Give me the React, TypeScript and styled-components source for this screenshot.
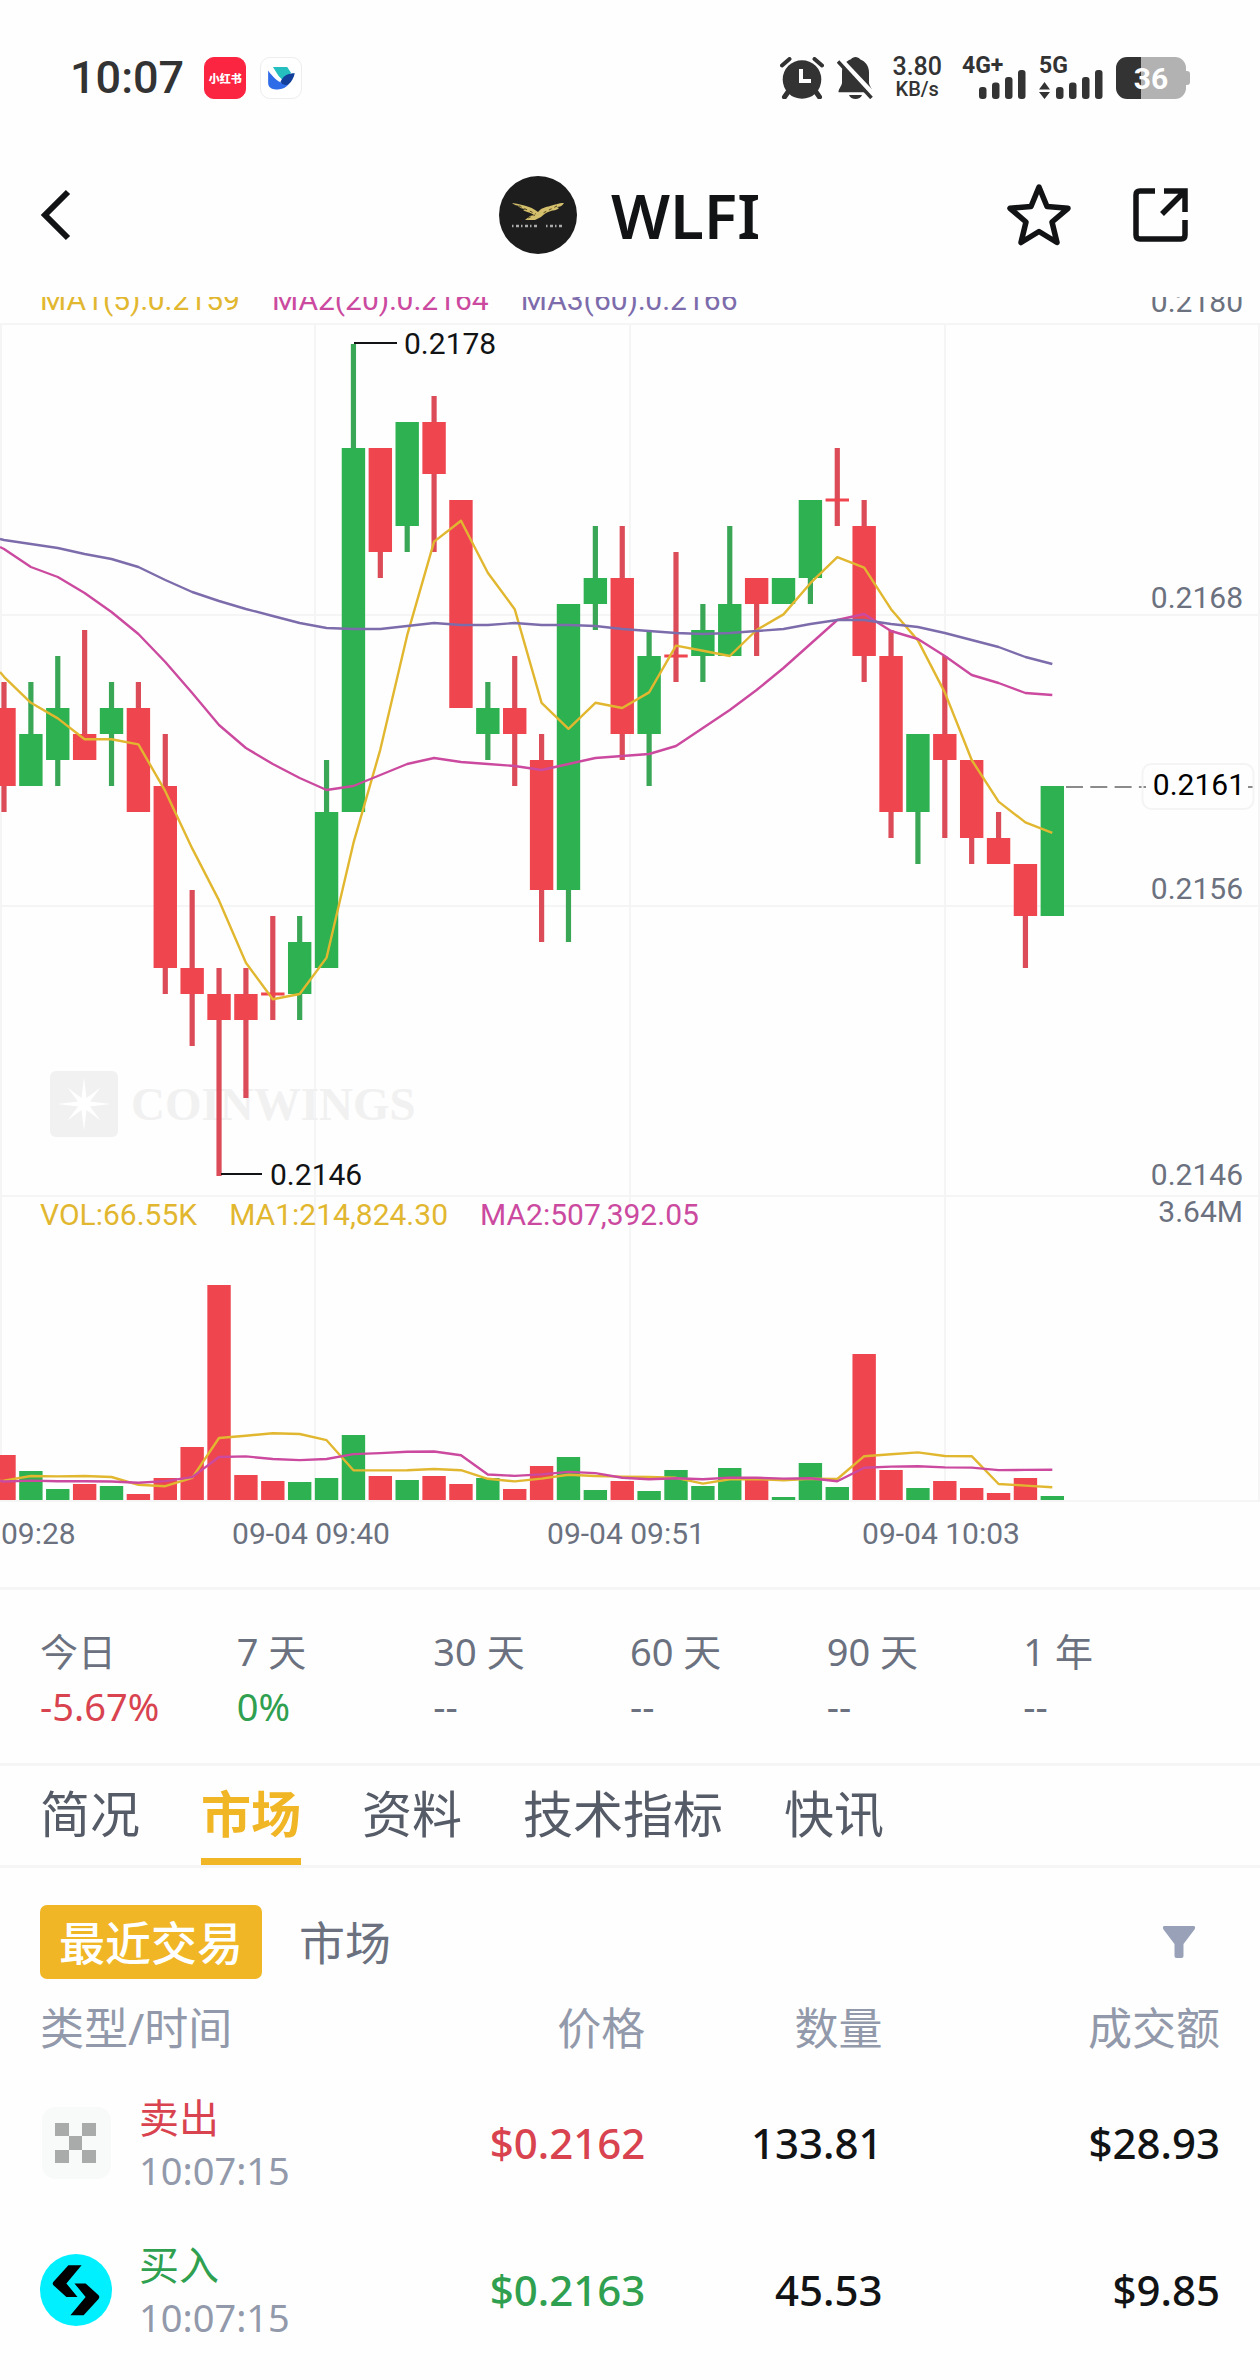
import React from 'react';
import styled, { createGlobalStyle } from 'styled-components';

const color = {
  up: '#2eb150',
  down: '#ef454f',
  upText: '#2fa04f',
  downText: '#d8434f',
  gold: '#f0b626',
  ma1: '#e2b730',
  ma2: '#cb4a9f',
  ma3: '#7d6cab',
  grid: '#f5f5f6',
  ink: '#111314',
  status: '#333333',
  axis: '#6b717e',
  muted: '#9299aa',
};

const GlobalStyle = createGlobalStyle`
  * { box-sizing: border-box; }
  body {
    margin: 0;
    background: #fefefe;
    color: ${color.ink};
    font-family: 'Noto Sans', 'Noto Sans CJK SC', sans-serif;
  }
  button { font: inherit; color: inherit; background: none; border: 0; padding: 0; cursor: pointer; }
  svg { display: block; }
`;

/* ---------- status bar ---------- */

const StatusBar = styled.div`
  display: flex;
  align-items: center;
  justify-content: space-between;
  height: 133px;
  padding: 23px 70px 0 70px;
  color: ${color.status};
  font-family: Roboto, 'Noto Sans CJK SC', sans-serif;
`;

const StatusGroup = styled.div<{ $gap: number }>`
  display: flex;
  align-items: center;
  gap: ${(p) => p.$gap}px;
`;

const Clock = styled.time`
  font-size: 45px;
  line-height: 52px;
  font-weight: 500;
  margin-right: 6px;
`;

const AppBadge = styled.span<{ $bg: string; $border: string }>`
  display: flex;
  align-items: center;
  justify-content: center;
  width: 42px;
  height: 42px;
  border-radius: 10px;
  border: 1px solid ${(p) => p.$border};
  background: ${(p) => p.$bg};
  color: #fff;
  font-size: 11px;
  font-weight: 900;
  white-space: nowrap;
`;

const NetSpeed = styled.div`
  display: flex;
  flex-direction: column;
  align-items: center;
  font-weight: 500;
  font-size: 25px;
  line-height: 22px;
  margin: 0 7px 0 5px;
  small { font-size: 20px; line-height: 22px; }
`;

const Signal = styled.div`
  display: flex;
  flex-direction: column;
  height: 42px;
  font-size: 23px;
  line-height: 18px;
  font-weight: 700;
  svg { margin-top: -6px; align-self: flex-end; }
`;

const Battery = styled.div`
  display: flex;
  align-items: center;
`;

const BatteryBody = styled.div`
  display: flex;
  align-items: center;
  justify-content: center;
  width: 70px;
  height: 42px;
  border-radius: 11px;
  background: linear-gradient(90deg, #333 36%, #b2b2b2 36%);
  color: #fff;
  font-size: 30px;
  font-weight: 700;
`;

const BatteryNub = styled.div`
  width: 4px;
  height: 14px;
  border-radius: 0 3px 3px 0;
  background: #b2b2b2;
`;

/* ---------- navigation ---------- */

const NavBar = styled.header`
  display: grid;
  grid-template-columns: 1fr auto 1fr;
  align-items: center;
  height: 164px;
  padding: 0 72px 0 40px;
`;

const BackButton = styled.button`
  justify-self: start;
`;

const Title = styled.h1`
  display: flex;
  align-items: center;
  gap: 34px;
  margin: 0 0 0 31px;
  font-size: 62px;
  line-height: 84px;
  font-weight: 600;
`;

const NavActions = styled.div`
  display: flex;
  align-items: center;
  justify-content: flex-end;
  gap: 61px;
`;

/* ---------- chart ---------- */

const ChartPane = styled.div`
  display: grid;
  overflow: hidden;
  > * { grid-area: 1 / 1; }
  > svg { width: 100%; height: auto; font-family: Roboto, sans-serif; font-size: 30px; }
`;

const Legend = styled.div<{ $clipped?: boolean }>`
  display: flex;
  gap: 32px;
  align-self: start;
  margin-top: ${(p) => (p.$clipped ? -15 : 0)}px;
  padding-left: 40px;
  font-family: Roboto, sans-serif;
  font-size: 30px;
  line-height: 36px;
  z-index: 1;
`;

const LegendItem = styled.span<{ $color: string }>`
  color: ${(p) => p.$color};
`;

/* ---------- stats ---------- */

const Stats = styled.dl`
  display: grid;
  grid-template-columns: repeat(6, 1fr);
  height: 179px;
  margin: 0;
  padding: 33px 40px 0;
  border-top: 3px solid ${color.grid};
  border-bottom: 3px solid ${color.grid};
`;

const StatLabel = styled.dt`
  font-size: 38px;
  line-height: 56px;
  color: ${color.axis};
`;

const StatValue = styled.dd<{ $color?: string }>`
  margin: 0;
  font-size: 38px;
  line-height: 54px;
  color: ${(p) => p.$color ?? color.axis};
`;

/* ---------- tabs ---------- */

const Tabs = styled.nav`
  display: flex;
  gap: 61px;
  height: 102px;
  padding: 0 40px;
  border-bottom: 3px solid ${color.grid};
`;

const Tab = styled.button<{ $active?: boolean }>`
  && {
    height: 99px;
    padding-top: 5px;
    border-bottom: 7px solid ${(p) => (p.$active ? color.gold : 'transparent')};
    color: ${(p) => (p.$active ? color.gold : '#555b67')};
    font-size: 50px;
    line-height: 87px;
    font-weight: ${(p) => (p.$active ? 700 : 400)};
  }
`;

const Toolbar = styled.div`
  display: flex;
  align-items: center;
  gap: 37px;
  margin-top: 37px;
  padding: 0 64px 0 40px;
`;

const Pill = styled.button<{ $active?: boolean }>`
  && {
    height: 74px;
    padding: ${(p) => (p.$active ? '0 19px' : '0')};
    border-radius: 7px;
    background: ${(p) => (p.$active ? color.gold : 'none')};
    color: ${(p) => (p.$active ? '#fff' : color.axis)};
    font-size: 46px;
    line-height: 74px;
    font-weight: ${(p) => (p.$active ? 500 : 400)};
  }
`;

const FilterButton = styled.button`
  margin-left: auto;
`;

/* ---------- trades ---------- */

const TradeTable = styled.table`
  width: calc(100% - 80px);
  margin: 9px 40px 0;
  border-collapse: collapse;
  table-layout: fixed;
`;

const HeadCell = styled.th<{ $width: string; $left?: boolean }>`
  width: ${(p) => p.$width};
  height: 80px;
  padding: 0;
  text-align: ${(p) => (p.$left ? 'left' : 'right')};
  font-size: 44px;
  line-height: 64px;
  font-weight: 400;
  color: ${color.muted};
  white-space: nowrap;
`;

const Cell = styled.td<{ $color?: string }>`
  height: 147px;
  padding: 3px 0 0;
  text-align: right;
  font-size: 42px;
  line-height: 56px;
  font-weight: 500;
  color: ${(p) => p.$color ?? color.ink};
`;

const TradeKind = styled.div`
  display: flex;
  align-items: center;
  gap: 27px;
  text-align: left;
  font-weight: 400;
`;

const Side = styled.div<{ $color: string }>`
  font-size: 40px;
  line-height: 54px;
  color: ${(p) => p.$color};
`;

const Time = styled.time`
  display: block;
  font-size: 38px;
  line-height: 50px;
  color: ${color.muted};
`;

/* ---------- chart data ---------- */

// High, body top, body bottom and low, in ticks of 0.0001 below 0.2178; then
// 1 for a rising candle, 0 for a falling one; then the volume.
const candles: [number, number, number, number, 0 | 1, number][] = [
  [13, 14, 17, 18, 0, 45], [13, 15, 17, 17, 1, 29], [12, 14, 16, 17, 1, 11], [11, 15, 16, 16, 0, 16],
  [13, 14, 15, 17, 1, 14], [13, 14, 18, 18, 0, 6], [15, 17, 24, 25, 0, 22], [21, 24, 25, 27, 0, 53],
  [24, 25, 26, 32, 0, 215], [24, 25, 26, 29, 0, 25], [22, 25, 25, 26, 0, 19], [22, 23, 25, 26, 1, 18],
  [16, 18, 24, 24, 1, 22], [0, 4, 18, 18, 1, 65], [4, 4, 8, 9, 0, 24], [3, 3, 7, 8, 1, 20],
  [2, 3, 5, 8, 0, 24], [6, 6, 14, 14, 0, 16], [13, 14, 15, 16, 1, 22], [12, 14, 15, 17, 0, 11],
  [15, 16, 21, 23, 0, 34], [10, 10, 21, 23, 1, 43], [7, 9, 10, 11, 1, 10], [7, 9, 15, 16, 0, 19],
  [11, 12, 15, 17, 1, 9], [8, 12, 12, 13, 1, 30], [10, 11, 12, 13, 1, 14], [7, 10, 12, 12, 1, 32],
  [9, 9, 10, 12, 0, 20], [9, 9, 10, 10, 1, 3], [6, 6, 9, 10, 1, 37], [4, 6, 6, 7, 1, 13],
  [6, 7, 12, 13, 0, 146], [11, 12, 18, 19, 0, 30], [15, 15, 18, 20, 1, 12], [12, 15, 16, 19, 0, 19],
  [16, 16, 19, 20, 0, 12], [18, 19, 20, 20, 0, 7], [20, 20, 22, 24, 0, 22], [17, 17, 22, 22, 1, 4],
];

const ma20 = [549, 567, 577, 593, 612, 634, 662, 693, 725, 748, 764, 778, 790, 786, 775, 764, 758, 762, 764, 766,
  770, 764, 758, 756, 754, 746, 728, 710, 690, 668, 644, 620, 614, 631, 639, 656, 675, 683, 693, 695];
const ma60 = [540, 544, 548, 554, 559, 567, 580, 592, 601, 609, 616, 623, 628, 629, 629, 626, 623, 625, 625, 623,
  625, 625, 626, 629, 631, 633, 634, 633, 631, 629, 624, 620, 620, 624, 627, 633, 640, 647, 657, 664];

const earlierCloses = [12, 10, 11, 12, 14];
const earlierVolumes = [20, 18, 16, 16, 18, 6, 13, 14, 19];

const cx = (i: number) => 4 + i * 26.88;
const priceY = (t: number) => 344 + t * 26;
const volumeY = (v: number) => 1500 - v;

function average(values: number[], before: number[], span: number): number[] {
  const all = [...before, ...values];
  return values.map((_, i) => {
    const end = i + before.length + 1;
    const part = all.slice(Math.max(0, end - span), end);
    return part.reduce((a, b) => a + b, 0) / part.length;
  });
}

const toPoints = (start: number, ys: number[]) =>
  [`0,${start}`, ...ys.map((y, i) => `${cx(i).toFixed(1)},${y.toFixed(1)}`)].join(' ');

const closes = candles.map(([, top, bottom, , up]) => (up ? top : bottom));
const volumes = candles.map((c) => c[5]);
const ma5 = average(closes, earlierCloses, 5).map(priceY);
const volMa5 = average(volumes, earlierVolumes, 5).map(volumeY);
const volMa10 = average(volumes, earlierVolumes, 10).map(volumeY);

// A candle that closed where it opened is drawn as a falling one in the price
// pane; its volume bar keeps the colour of the data.
const candleUp = (top: number, bottom: number, up: 0 | 1) => up === 1 && top !== bottom;

const volumeUp = (i: number, up: 0 | 1) => up === 1;

const MaLine = ({ points, stroke }: { points: string; stroke: string }) => (
  <polyline points={points} fill="none" stroke={stroke} strokeWidth="2.4" strokeLinejoin="round" />
);

const VerticalGrid = ({ from, to }: { from: number; to: number }) => (
  <g stroke={color.grid} strokeWidth="2">
    {[1, 315, 630, 945, 1259].map((x) => (
      <line key={x} x1={x} x2={x} y1={from} y2={to} />
    ))}
  </g>
);

const starPoints = Array.from({ length: 16 }, (_, i) => {
  const r = i % 2 ? 6.5 : i % 4 ? 23 : 26.5;
  const a = (i * Math.PI) / 8;
  return `${(84 + r * Math.sin(a)).toFixed(1)},${(1104 - r * Math.cos(a)).toFixed(1)}`;
}).join(' ');

const PriceChart = () => (
  <svg viewBox="0 297 1260 900" role="img" aria-label="WLFI price chart">
    <VerticalGrid from={324} to={1197} />
    <g stroke={color.grid} strokeWidth="2">
      {[324, 615, 906, 1196].map((y) => (
        <line key={y} x1="0" x2="1260" y1={y} y2={y} />
      ))}
    </g>
    <rect x="50" y="1071" width="68" height="66" rx="6" fill="#f1f1f1" />
    <polygon points={starPoints} fill="#fff" />
    <text x="131" y="1120" fill="#f1f1f1" fontFamily="'Liberation Serif', serif" fontWeight="700" fontSize="47">
      COINWINGS
    </text>
    {candles.map(([high, top, bottom, low, up], i) => {
      const rising = candleUp(top, bottom, up);
      return (
        <g key={i} fill={rising ? color.up : color.down}>
          <rect
            x={cx(i) - 2.6}
            y={priceY(high)}
            width="5.2"
            height={priceY(low) - priceY(high)}
            fill={rising ? '#3aa757' : '#dc4c58'}
          />
          <rect
            x={cx(i) - 11.7}
            y={top === bottom ? priceY(top) - 1.5 : priceY(top)}
            width="23.4"
            height={Math.max(3, priceY(bottom) - priceY(top))}
          />
        </g>
      );
    })}
    <MaLine points={toPoints(672, ma5)} stroke={color.ma1} />
    <MaLine points={toPoints(547, ma20)} stroke={color.ma2} />
    <MaLine points={toPoints(539, ma60)} stroke={color.ma3} />
    <g stroke={color.ink} strokeWidth="2.2">
      <line x1="354" x2="397" y1="343" y2="343" />
      <line x1="221" x2="262" y1="1174" y2="1174" />
    </g>
    <g fill={color.ink}>
      <text x="404" y="354">0.2178</text>
      <text x="270" y="1185">0.2146</text>
    </g>
    <g fill={color.axis} textAnchor="end">
      <text x="1243" y="312">0.2180</text>
      <text x="1243" y="608">0.2168</text>
      <text x="1243" y="899">0.2156</text>
      <text x="1243" y="1185">0.2146</text>
    </g>
    <line x1="1066" x2="1256" y1="787" y2="787" stroke="#666" strokeWidth="1.6" strokeDasharray="17 7.3" />
    <rect x="1146" y="764" width="102" height="45" rx="9" fill="#fefefe" />
    <rect x="1142.5" y="764" width="111" height="45" rx="9" fill="none" stroke="#f4f4f5" strokeWidth="2" />
    <text x="1245" y="795" textAnchor="end" fill="#000">0.2161</text>
  </svg>
);

const VolumeChart = () => (
  <svg viewBox="0 1197 1260 390" role="img" aria-label="WLFI volume chart">
    <VerticalGrid from={1197} to={1500} />
    <line x1="0" x2="1260" y1="1501" y2="1501" stroke={color.grid} strokeWidth="2" />
    {candles.map(([, , , , up, volume], i) => (
      <rect
        key={i}
        x={cx(i) - 11.7}
        y={volumeY(volume)}
        width="23.4"
        height={volume}
        fill={volumeUp(i, up) ? color.up : color.down}
      />
    ))}
    <MaLine points={toPoints(1481, volMa5)} stroke={color.ma1} />
    <MaLine points={toPoints(1481, volMa10)} stroke={color.ma2} />
    <g fill={color.axis}>
      <text x="1243" y="1222" textAnchor="end">3.64M</text>
      <text x="1" y="1544">09:28</text>
      <g textAnchor="middle">
        <text x="311" y="1544">09-04 09:40</text>
        <text x="626" y="1544">09-04 09:51</text>
        <text x="941" y="1544">09-04 10:03</text>
      </g>
    </g>
  </svg>
);

/* ---------- icons ---------- */

const AlarmIcon = () => (
  <svg width="44" height="42" viewBox="0 0 44 42" fill="none" stroke={color.status}>
    <path d="M8 35 4.500 40M36 35l3.500 5" strokeWidth="5" strokeLinecap="round" />
    <circle cx="22" cy="22.500" r="19.300" fill={color.status} stroke="none" />
    <path d="M2 8.500 9.500 2M42 8.500 34.500 2" strokeWidth="4" strokeLinecap="round" />
    <path d="M21 12v12h10" stroke="#fff" strokeWidth="4" />
  </svg>
);

const BellOffIcon = () => (
  <svg width="37" height="42" viewBox="0 0 37 42">
    <path
      d="M18.500 0c2 0 3.500 1 4.500 2.200 5.500 2 9 7 9 13v10c0 4 3.500 6 3.500 10H1.500c0-4 3.500-6 3.500-10V15c0-6 3.500-11 9-12.800C15 1 16.500 0 18.500 0Z"
      fill={color.status}
    />
    <path d="M12 38h13c-1 2.500-3.500 4-6.500 4S13 40.500 12 38Z" fill={color.status} />
    <path d="M4 3 37 38" stroke="#fff" strokeWidth="5" />
    <path d="M1 4.500 34.500 41" stroke={color.status} strokeWidth="3.500" />
  </svg>
);

const SignalBars = ({ arrows }: { arrows?: boolean }) => (
  <svg width={64} height="30" viewBox="0 0 64 30" fill={color.status}>
    {arrows && <path d="M0 20.500 5.500 13 11 20.500ZM0 23 5.500 30 11 23Z" />}
    <rect x="17" y="18" width="7.500" height="12" rx="3" />
    <rect x="30" y="13.500" width="7.500" height="16.500" rx="3" />
    <rect x="43" y="8" width="7.500" height="22" rx="3" />
    <rect x="56" y="1" width="7.500" height="29" rx="3" />
  </svg>
);

const BirdIcon = () => (
  <svg width="40" height="40" viewBox="0 0 41 42">
    <path d="M12 9.500h15l4 6-7 9.500-6-6Z" fill="#25bfc0" />
    <path d="M7 13c5 7 10 12 15 13l6 2c-3 4-8 5-13 5-4 0-8-2-8-7Z" fill="#2f6ce8" />
    <path d="M20 25c3-7 8-9 15-9-1 4-3 9-7 12-3 1-6 0-8-3Z" fill="#123f9c" />
  </svg>
);

const TokenLogo = () => (
  <svg width="78" height="78" viewBox="0 0 78 78">
    <circle cx="39" cy="39" r="39" fill="#1d1d1d" />
    <path
      d="M13 27c7 1 12 2 17 4 4 1 6 3 9 5 3-4 8-5 12-6 5-1 8-3 14-3-2 3-4 4-7 4l2 1c-3 3-6 2-8 3-4 1-7 3-10 6l-6 3H26l5-4 4-1c-4-3-8-3-11-5l3-1c-4 0-6-1-8-3l4 0c-5 0-8-1-10-3Z"
      fill="#d3bf6c"
    />
    <path d="M20 30 37 38M58 30 42 38M29 42l7-3" stroke="#55491f" strokeWidth="1" strokeDasharray="3 3" />
    <path d="M13 50h27M47 50h18" stroke="#aaa" strokeWidth="2.500" strokeDasharray="1.500 2.500 3 2" />
  </svg>
);

const OkxLogo = () => (
  <svg width="72" height="72" viewBox="0 0 72 72">
    <rect x="2" width="69" height="72" rx="14" fill="#f8f9f9" />
    <path d="M15 16h14v13H15zM42 16h14v13H42zM29 29h13v14H29zM15 43h14v13H15zM42 43h14v13H42z" fill="#a9aaaa" />
  </svg>
);

const BitgetLogo = () => (
  <svg width="72" height="72" viewBox="0 0 71 71">
    <circle cx="35.500" cy="35.500" r="35.500" fill="#00f0ff" />
    <path d="M28 11h13L26 29l11 13.500H26L13.500 31q-2-2 0-4Z" fill="#000" />
    <path d="M43 60.500H30L45 42.500 34 29h11L57.500 40.500q2 2 0 4Z" fill="#000" />
  </svg>
);

/* ---------- page ---------- */

const stats: [string, string, string?][] = [
  ['今日', '-5.67%', color.downText],
  ['7 天', '0%', color.upText],
  ['30 天', '--'],
  ['60 天', '--'],
  ['90 天', '--'],
  ['1 年', '--'],
];

const tabs = ['简况', '市场', '资料', '技术指标', '快讯'];

const trades = [
  { logo: <OkxLogo />, side: '卖出', time: '10:07:15', price: '$0.2162', amount: '133.81', total: '$28.93', tone: color.downText },
  { logo: <BitgetLogo />, side: '买入', time: '10:07:15', price: '$0.2163', amount: '45.53', total: '$9.85', tone: color.upText },
];

export default function App() {
  return (
    <>
      <GlobalStyle />
      <StatusBar>
        <StatusGroup $gap={14}>
          <Clock>10:07</Clock>
          <AppBadge $bg="#fb2441" $border="#fb2441">小红书</AppBadge>
          <AppBadge $bg="#fff" $border="#ededed"><BirdIcon /></AppBadge>
        </StatusGroup>
        <StatusGroup $gap={13}>
          <AlarmIcon />
          <BellOffIcon />
          <NetSpeed>
            3.80
            <small>KB/s</small>
          </NetSpeed>
          <Signal>
            4G+
            <SignalBars />
          </Signal>
          <Signal>
            5G
            <SignalBars arrows />
          </Signal>
          <Battery>
            <BatteryBody>36</BatteryBody>
            <BatteryNub />
          </Battery>
        </StatusGroup>
      </StatusBar>

      <NavBar>
        <BackButton aria-label="返回">
          <svg width="32" height="52" viewBox="0 0 32 52" fill="none" stroke={color.ink} strokeWidth="6">
            <path d="M28 3 5 26l23 23" />
          </svg>
        </BackButton>
        <Title>
          <TokenLogo />
          WLFI
        </Title>
        <NavActions>
          <button aria-label="收藏">
            <svg width="66" height="64" viewBox="0 0 66 64" fill="none" stroke={color.ink} strokeWidth="5.500" strokeLinejoin="round">
              <path d="m33 4 8 19.500 21 1.800-16 13.700 5 20.500L33 48.500 15 59.500 20 39 4 25.300l21-1.800Z" />
            </svg>
          </button>
          <button aria-label="分享">
            <svg width="55" height="54" viewBox="0 0 55 54" fill="none" stroke={color.ink} strokeWidth="5.500">
              <path d="M22 3H7Q3 3 3 7v40q0 4 4 4h41q4 0 4-4V32M31 3h21v21M51 4 29 26" />
            </svg>
          </button>
        </NavActions>
      </NavBar>

      <main>
        <ChartPane>
          <PriceChart />
          <Legend $clipped>
            <LegendItem $color={color.ma1}>MA1(5):0.2159</LegendItem>
            <LegendItem $color={color.ma2}>MA2(20):0.2164</LegendItem>
            <LegendItem $color={color.ma3}>MA3(60):0.2166</LegendItem>
          </Legend>
        </ChartPane>
        <ChartPane>
          <VolumeChart />
          <Legend>
            <LegendItem $color={color.ma1}>VOL:66.55K</LegendItem>
            <LegendItem $color={color.ma1}>MA1:214,824.30</LegendItem>
            <LegendItem $color={color.ma2}>MA2:507,392.05</LegendItem>
          </Legend>
        </ChartPane>

        <Stats>
          {stats.map(([label, value, tone]) => (
            <div key={label}>
              <StatLabel>{label}</StatLabel>
              <StatValue $color={tone}>{value}</StatValue>
            </div>
          ))}
        </Stats>

        <Tabs>
          {tabs.map((name) => (
            <Tab key={name} $active={name === '市场'}>{name}</Tab>
          ))}
        </Tabs>

        <Toolbar>
          <Pill $active>最近交易</Pill>
          <Pill>市场</Pill>
          <FilterButton aria-label="筛选">
            <svg width="34" height="34" viewBox="0 0 34 34" fill="#98a1b7">
              <path d="M2 1h30q2 1 .5 3.500L21.500 19v12q0 2-2 2h-5q-2 0-2-2V19L1.500 4.500Q0 2 2 1Z" />
            </svg>
          </FilterButton>
        </Toolbar>

        <TradeTable>
          <thead>
            <tr>
              <HeadCell $width="31%" $left>类型/时间</HeadCell>
              <HeadCell $width="20.3%">价格</HeadCell>
              <HeadCell $width="20.1%">数量</HeadCell>
              <HeadCell $width="28.6%">成交额</HeadCell>
            </tr>
          </thead>
          <tbody>
            {trades.map((t) => (
              <tr key={t.price}>
                <Cell>
                  <TradeKind>
                    {t.logo}
                    <div>
                      <Side $color={t.tone}>{t.side}</Side>
                      <Time>{t.time}</Time>
                    </div>
                  </TradeKind>
                </Cell>
                <Cell $color={t.tone}>{t.price}</Cell>
                <Cell>{t.amount}</Cell>
                <Cell>{t.total}</Cell>
              </tr>
            ))}
          </tbody>
        </TradeTable>
      </main>
    </>
  );
}
